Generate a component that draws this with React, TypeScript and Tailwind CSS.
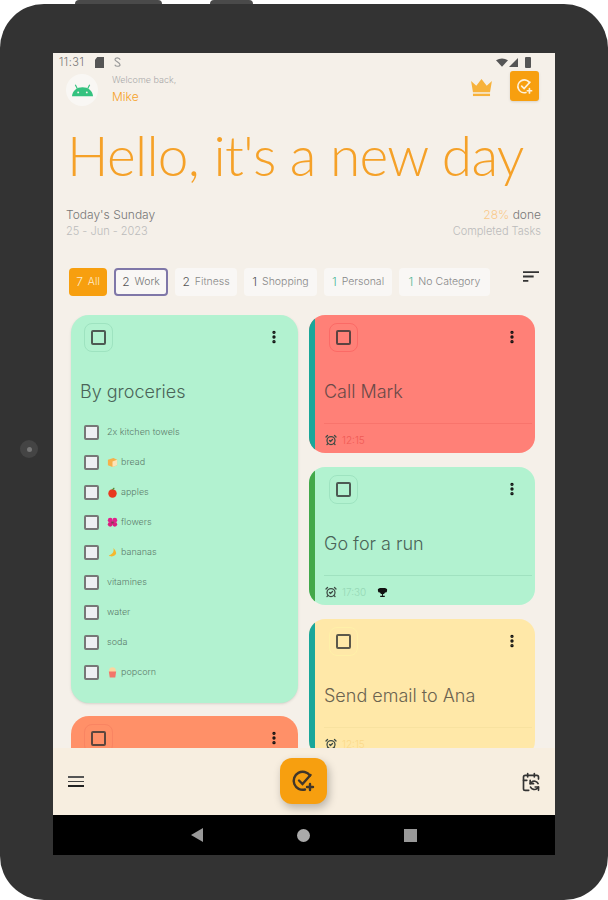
import { AlarmClockCheck, CalendarSync, EllipsisVertical } from "lucide-react";

const FONT = "font-['Inter','Noto_Sans',sans-serif]";

const CHIPS = [
  { count: 7, label: "All", width: "w-[38px]", tone: "bg-[#f79f0f] text-[#fdeccd]", countTone: "" },
  { count: 2, label: "Work", width: "w-[54px]", tone: "bg-[#f9f7f5] border-2 border-[#7f77a8] text-[#777]", countTone: "text-[#555]" },
  { count: 2, label: "Fitness", width: "w-[62px]", tone: "bg-[#f9f7f5] text-[#888]", countTone: "text-[#555]" },
  { count: 1, label: "Shopping", width: "w-[73px]", tone: "bg-[#f9f7f5] text-[#888]", countTone: "text-[#555]" },
  { count: 1, label: "Personal", width: "w-[68px]", tone: "bg-[#f9f7f5] text-[#888]", countTone: "text-[#54b79a]" },
  { count: 1, label: "No Category", width: "w-[91px]", tone: "bg-[#f9f7f5] text-[#888]", countTone: "text-[#54b79a]" },
];

type Emoji = "bread" | "apple" | "flower" | "banana" | "popcorn" | null;

const GROCERIES: { label: string; emoji: Emoji }[] = [
  { label: "2x kitchen towels", emoji: null },
  { label: "bread", emoji: "bread" },
  { label: "apples", emoji: "apple" },
  { label: "flowers", emoji: "flower" },
  { label: "bananas", emoji: "banana" },
  { label: "vitamines", emoji: null },
  { label: "water", emoji: null },
  { label: "soda", emoji: null },
  { label: "popcorn", emoji: "popcorn" },
];

function EmojiIcon({ kind }: { kind: Emoji }) {
  if (kind === "bread")
    return (
      <svg viewBox="0 0 12 12" className="w-[11px] h-[11px]">
        <path d="M1 3l6-2 4 2v6l-5 2-5-2z" fill="#f6b04a" />
        <path d="M6 5l5-2v6l-5 2z" fill="#fbe3b8" />
      </svg>
    );
  if (kind === "apple")
    return (
      <svg viewBox="0 0 12 12" className="w-[11px] h-[11px]">
        <circle cx="6" cy="7" r="4.6" fill="#e8381f" />
        <path d="M6 3l2-2" stroke="#4d8a2d" strokeWidth="1.2" />
      </svg>
    );
  if (kind === "flower")
    return (
      <svg viewBox="0 0 12 12" className="w-[11px] h-[11px]">
        <circle cx="3.5" cy="3.5" r="2.6" fill="#e0218a" />
        <circle cx="8.5" cy="3.5" r="2.6" fill="#e0218a" />
        <circle cx="3.5" cy="8" r="2.6" fill="#d91f7f" />
        <circle cx="8.5" cy="8" r="2.6" fill="#d91f7f" />
        <circle cx="6" cy="6" r="1.4" fill="#8d2b52" />
      </svg>
    );
  if (kind === "banana")
    return (
      <svg viewBox="0 0 12 12" className="w-[11px] h-[11px]">
        <path d="M7 1c1 4-1 7-5 8 1 2 6 2 8-2 0-2-1-4-3-6z" fill="#f5b82e" />
      </svg>
    );
  if (kind === "popcorn")
    return (
      <svg viewBox="0 0 12 12" className="w-[11px] h-[11px]">
        <circle cx="6" cy="4" r="3.6" fill="#fbd7a0" />
        <path d="M2 5h8l-1 6.5H3z" fill="#f2766a" />
      </svg>
    );
  return null;
}

function CardCheck({ border }: { border: string }) {
  return (
    <div className={`w-[29px] h-[29px] rounded-lg border flex items-center justify-center ${border}`}>
      <div className="w-[15px] h-[15px] rounded-[2px] border-2 border-[#333]/80" />
    </div>
  );
}

function CardMenu() {
  return <EllipsisVertical className="w-[16px] h-[16px] text-[#111]" strokeWidth={3} />;
}

function TaskCard({
  title,
  time,
  bg,
  bar,
  ring,
  titleTone,
  timeTone,
  line,
  trophy,
  height,
}: {
  title: string;
  time: string;
  bg: string;
  bar: string;
  ring: string;
  titleTone: string;
  timeTone: string;
  line: string;
  trophy?: boolean;
  height: string;
}) {
  return (
    <div className={`rounded-2xl overflow-hidden flex shrink-0 ${height} ${bg}`}>
      <div className={`w-[6px] shrink-0 ${bar}`} />
      <div className="flex-1 flex flex-col pl-[9px] pr-[3px]">
        <div className="flex items-start justify-between pt-[8px] pl-[5px] pr-[12px]">
          <CardCheck border={ring} />
          <div className="pt-[6px]">
            <CardMenu />
          </div>
        </div>
        <div className={`mt-[27px] h-[26px] flex items-center text-[18px] font-light leading-none ${titleTone}`}>
          {title}
        </div>
        <div className={`mt-[18px] border-t ${line} pt-[3px] pl-[1px] flex items-center gap-[5px] h-[30px]`}>
          <AlarmClockCheck className="w-[12px] h-[12px] text-[#3d4a44]" strokeWidth={2.5} />
          <span className={`text-[10px] font-light ${timeTone}`}>{time}</span>
          {trophy && (
            <svg viewBox="0 0 24 24" className="ml-[6px] w-[11px] h-[11px]" fill="#111">
              <path d="M5 2h14v2h3v4a4 4 0 0 1-4 4h-.5A6 6 0 0 1 13 15.900V19h4v3H7v-3h4v-3.100A6 6 0 0 1 6.500 12H6a4 4 0 0 1-4-4V4h3z" />
            </svg>
          )}
        </div>
      </div>
    </div>
  );
}

function StatusBar() {
  return (
    <div className="h-[18px] shrink-0 flex items-center justify-between pl-[6px] pr-[24px] text-[#777]">
      <div className="flex items-center">
        <span className="text-[11px] font-light tracking-[0.5px]">11:31</span>
        <svg viewBox="0 0 10 12" className="ml-[11px] w-[9px] h-[11px]" fill="#555">
          <path d="M2.500 0H10v12H0V3z" />
        </svg>
        <svg viewBox="0 0 10 12" className="ml-[9px] w-[9px] h-[12px]" fill="none" stroke="#999" strokeWidth="1.300">
          <path d="M8 3.500C7 1 3 .8 2.200 3c-.6 2 5.600 3.500 5.600 6 0 2.200-4.800 2.500-5.800 0" />
        </svg>
      </div>
      <div className="flex items-center gap-[1px]">
        <svg viewBox="0 0 14 10" className="w-[12px] h-[9px]" fill="#555">
          <path d="M0 2.500Q7-2 14 2.500L7 10z" />
        </svg>
        <svg viewBox="0 0 10 10" className="w-[9px] h-[9px]" fill="#555">
          <path d="M0 10 10 0v10z" />
        </svg>
        <div className="ml-[6px] w-[6px] h-[11px] rounded-[1px] bg-[#555]" />
      </div>
    </div>
  );
}

function Header() {
  return (
    <div className="h-[35px] shrink-0 flex items-start pl-[13px] pr-[16px]">
      <div className="w-[32px] h-[32px] mt-[3px] rounded-full bg-[#f9f7f4] flex items-center justify-center">
        <svg viewBox="0 0 24 14" className="w-[23px] h-[14px]">
          <path d="M1 13.500C1.500 7.500 6 4 12 4s10.500 3.500 11 9.500z" fill="#34c27f" />
          <path d="M6.500 5.500 4.500 1.500M17.500 5.500l2-4" stroke="#34c27f" strokeWidth="1.200" />
          <circle cx="7.500" cy="9.500" r="1" fill="#f4f0ea" />
          <circle cx="16.500" cy="9.500" r="1" fill="#f4f0ea" />
        </svg>
      </div>
      <div className="ml-[14px] mt-[3px] flex flex-col">
        <span className="text-[9px] leading-[12px] font-light text-[#aaa]">Welcome back,</span>
        <span className="mt-[3px] text-[12px] leading-[15px] font-light text-[#f5a128]">Mike</span>
      </div>
      <svg viewBox="0 0 24 19" className="ml-auto mt-[8px] w-[23px] h-[18px]" fill="#f7b23b">
        <path d="M1 2l5.500 5L12 0l5.500 7L23 2l-2 12H3z" />
        <rect x="3" y="15.500" width="18" height="2.500" />
      </svg>
      <div className="ml-[17px] w-[29px] h-[30px] rounded-[3px] bg-[#f79f0f] flex items-center justify-center shadow-sm">
        <CheckPlus className="w-[17px] h-[17px]" color="#fdf1dc" />
      </div>
    </div>
  );
}

function CheckPlus({ className, color }: { className: string; color: string }) {
  return (
    <svg viewBox="0 0 24 24" className={className} fill="none" stroke={color} strokeWidth="2.400" strokeLinecap="round">
      <path d="M19 6.500A9 9 0 1 0 14 20.500" />
      <path d="M8 11.500l3.500 3.500 8-9" />
      <path d="M19 15v6M16 18h6" />
    </svg>
  );
}

export default function App() {
  return (
    <div className={`relative w-[608px] h-[900px] bg-white overflow-hidden ${FONT}`}>
      <div className="absolute top-0 left-[75px] w-[87px] h-[6px] rounded-t bg-[#4a4a4a]" />
      <div className="absolute top-0 left-[210px] w-[43px] h-[6px] rounded-t bg-[#4a4a4a]" />
      <div className="relative mt-[4px] h-[896px] rounded-[44px] bg-[#333333] px-[53px] pt-[49px]">
        <div className="absolute left-[20px] top-[436px] w-[18px] h-[18px] rounded-full bg-[#444] flex items-center justify-center">
          <div className="w-[5px] h-[5px] rounded-full bg-[#777]" />
        </div>
        <div className="relative w-[502px] h-[802px] bg-[#f5f0e9] flex flex-col overflow-hidden">
          <StatusBar />
          <Header />
          <div className="h-[80px] mt-[9px] shrink-0 pl-[14px] text-[#f5a128] text-[55px] leading-[80px] tracking-[-0.7px] font-['Lato',sans-serif] font-light whitespace-nowrap">
            Hello, it's a new day
          </div>
          <div className="mt-[12px] h-[34px] shrink-0 flex justify-between pl-[13px] pr-[14px]">
            <div className="flex flex-col">
              <span className="text-[12px] leading-[16px] font-light text-[#777]">Today's Sunday</span>
              <span className="text-[11px] leading-[16px] font-light text-[#bbb]">25 - Jun - 2023</span>
            </div>
            <div className="flex flex-col items-end">
              <span className="text-[12px] leading-[16px] font-light text-[#777]">
                <span className="text-[#f9c98a]">28%</span> done
              </span>
              <span className="text-[11px] leading-[16px] font-light text-[#bbb]">Completed Tasks</span>
            </div>
          </div>
          <div className="mt-[27px] h-[28px] shrink-0 flex items-start pl-[16px] pr-[16px]">
            <div className="flex gap-[7px]">
              {CHIPS.map((c) => (
                <div
                  key={c.label}
                  className={`h-[28px] rounded-[4px] flex items-center justify-center gap-[5px] text-[10.500px] font-light whitespace-nowrap ${c.width} ${c.tone}`}
                >
                  <span className={`text-[12px] ${c.countTone}`}>{c.count}</span>
                  <span>{c.label}</span>
                </div>
              ))}
            </div>
            <svg viewBox="3 6 18 12" className="ml-auto mt-[3px] w-[16px] h-[11px]" fill="#333">
              <path d="M3 18h6v-2H3v2zM3 6v2h18V6H3zm0 7h12v-2H3v2z" />
            </svg>
          </div>
          <div className="mt-[19px] flex-1 min-h-0 flex gap-[11px] pl-[18px] overflow-hidden">
            <div className="w-[227px] shrink-0 flex flex-col gap-[13px]">
              <div className="h-[388px] shrink-0 rounded-[18px] bg-[#b2f2d0] shadow-sm pt-[8px]">
                <div className="flex items-start justify-between pl-[13px] pr-[16px]">
                  <CardCheck border="border-[#9ee3c0]" />
                  <div className="pt-[6px]">
                    <CardMenu />
                  </div>
                </div>
                <div className="mt-[26px] ml-[9px] h-[26px] flex items-center text-[18px] font-light text-[#4b6458]">
                  By groceries
                </div>
                <div className="mt-[20px] pl-[13px] flex flex-col gap-[14px]">
                  {GROCERIES.map((g) => (
                    <div key={g.label} className="h-[16px] flex items-center">
                      <div className="w-[15px] h-[15px] rounded-[2px] bg-[#eef0f3] border-2 border-[#777]" />
                      <div className="ml-[8px] flex items-center gap-[3px] text-[9px] font-light text-[#5d7d6d]">
                        {g.emoji && <EmojiIcon kind={g.emoji} />}
                        <span>{g.label}</span>
                      </div>
                    </div>
                  ))}
                </div>
              </div>
              <div className="h-[120px] shrink-0 rounded-t-[18px] bg-[#ff9068] pt-[8px]">
                <div className="flex items-start justify-between pl-[13px] pr-[16px]">
                  <CardCheck border="border-[#f98462]" />
                  <div className="pt-[6px]">
                    <CardMenu />
                  </div>
                </div>
              </div>
            </div>
            <div className="w-[226px] shrink-0 flex flex-col gap-[14px]">
              <TaskCard
                title="Call Mark"
                time="12:15"
                height="h-[138px]"
                bg="bg-[#ff8077]"
                bar="bg-[#1aa79a]"
                ring="border-[#fb6a66]"
                titleTone="text-[#6b4a48]"
                timeTone="text-[#f05a55]"
                line="border-[#f8746c]"
              />
              <TaskCard
                title="Go for a run"
                time="17:30"
                height="h-[138px]"
                bg="bg-[#b2f2d0]"
                bar="bg-[#43a84a]"
                ring="border-[#9ee3c0]"
                titleTone="text-[#4b6458]"
                timeTone="text-[#96d8b6]"
                line="border-[#a0e2c0]"
                trophy
              />
              <TaskCard
                title="Send email to Ana"
                time="12:15"
                height="h-[138px]"
                bg="bg-[#ffe8a8]"
                bar="bg-[#1aa79a]"
                ring="border-[#fff0a8]"
                titleTone="text-[#6b6350]"
                timeTone="text-[#fbd98a]"
                line="border-[#f8e2a0]"
              />
            </div>
          </div>
          <div className="h-[67px] shrink-0 bg-[#f7eee0] flex items-center justify-between pl-[15px] pr-[14px]">
            <div className="flex flex-col gap-[3px] w-[16px]">
              <div className="h-[1.500px] bg-[#555]" />
              <div className="h-[1.500px] bg-[#444]" />
              <div className="h-[1.500px] bg-[#222]" />
            </div>
            <div className="ml-[1px] mb-[2px] w-[47px] h-[46px] rounded-xl bg-[#f79f0f] flex items-center justify-center shadow-[2px_4px_8px_rgba(0,0,0,0.25)]">
              <CheckPlus className="w-[24px] h-[24px]" color="#40362a" />
            </div>
            <CalendarSync className="w-[20px] h-[20px] text-[#333]" strokeWidth={2} />
          </div>
          <div className="h-[40px] shrink-0 bg-black flex items-center justify-center">
            <svg viewBox="0 0 12 14" className="w-[12px] h-[14px] mr-[94px]" fill="#999">
              <path d="M12 0v14L0 7z" />
            </svg>
            <div className="w-[13px] h-[13px] rounded-full bg-[#aaa]" />
            <div className="ml-[94px] w-[13px] h-[13px] bg-[#999]" />
          </div>
        </div>
      </div>
    </div>
  );
}
